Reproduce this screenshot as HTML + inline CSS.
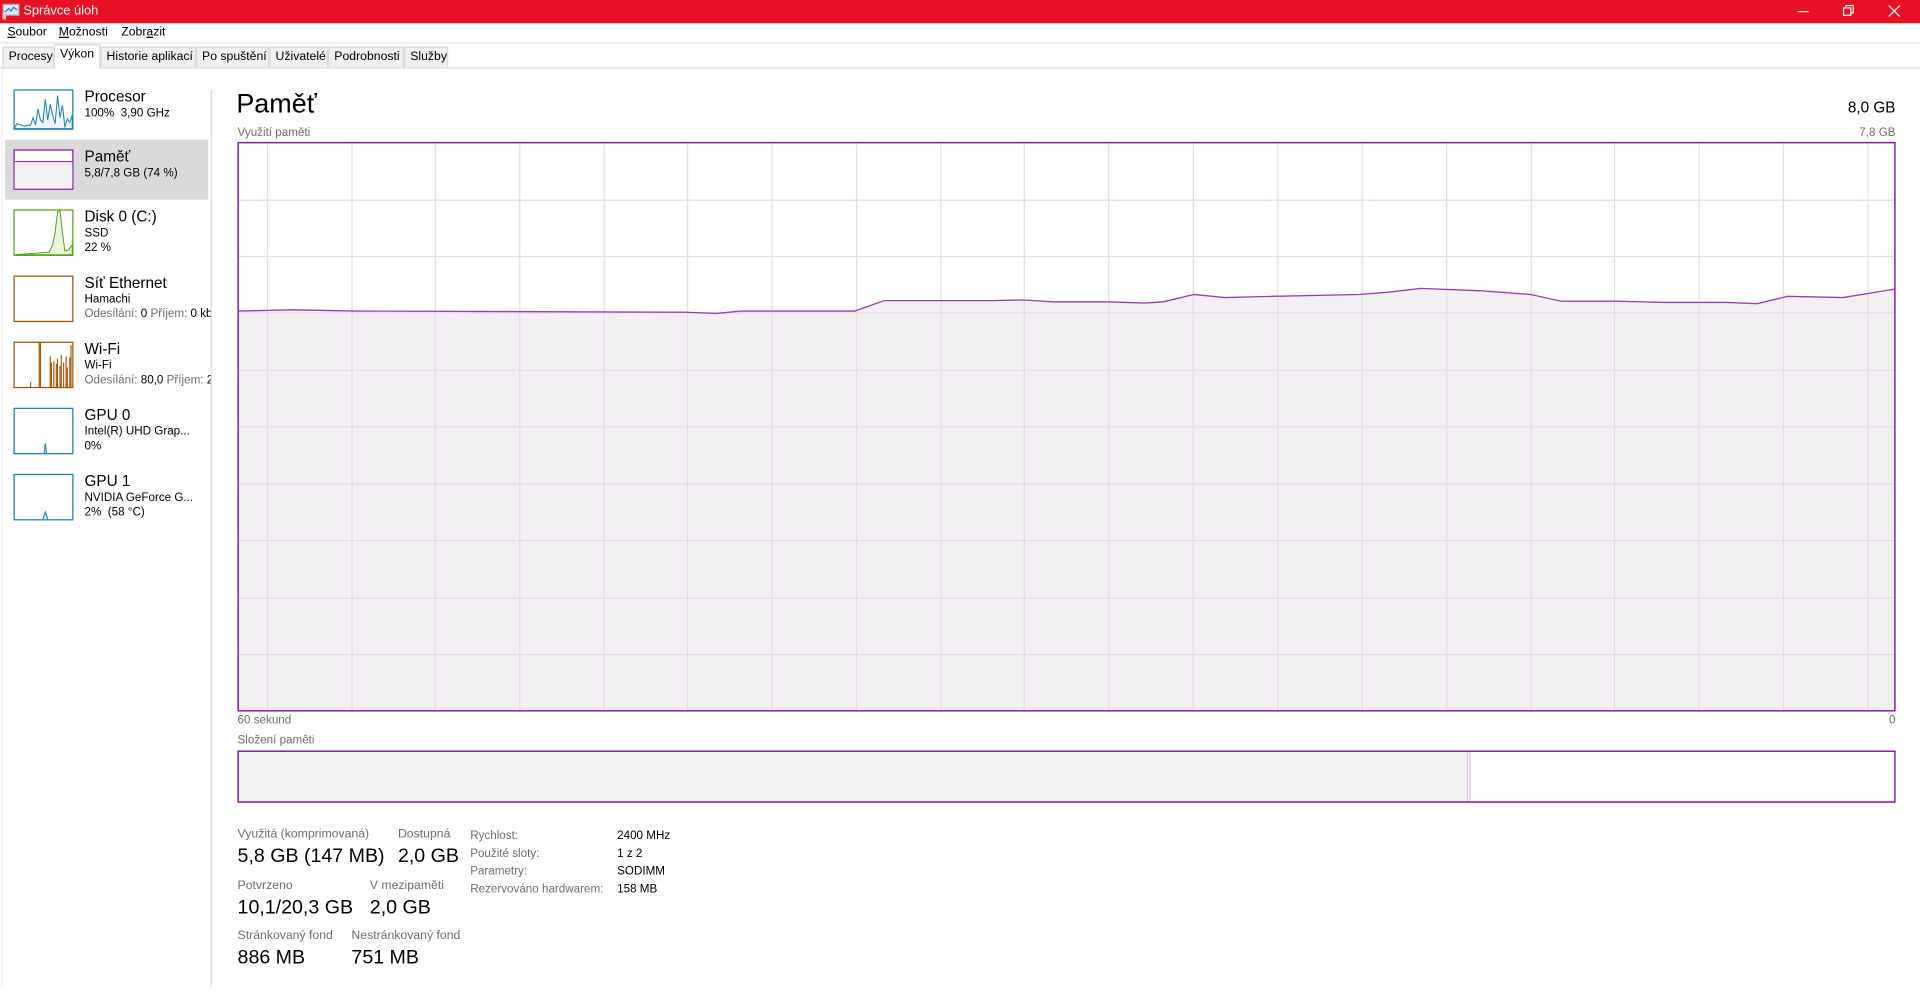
<!DOCTYPE html>
<html><head><meta charset="utf-8">
<style>
*{margin:0;padding:0;box-sizing:border-box}
html,body{width:1920px;height:997px;overflow:hidden;background:#fff}
#w{position:absolute;left:0;top:0;width:1568px;height:815px;transform:scale(1.22449);transform-origin:0 0;font-family:"Liberation Sans",sans-serif;color:#000}
.a{position:absolute;white-space:nowrap}
.tb{left:0;top:0;width:1568px;height:19px;background:#e81123;color:#fff}
.tab{position:absolute;top:38px;height:17px;border:1px solid #d9d9d9;border-bottom:none;background:#f0f0f0;font-size:10px;line-height:15px;padding-left:4px;color:#000}
.g{font-size:10px;color:#6d6d6d}
.v{font-size:16px;color:#000}
.it{font-size:12.5px}
.sub{font-size:9.5px;line-height:12px}
.gr{color:#6d6d6d}
</style></head><body><div id="w">
<div class="a tb">
  <svg class="a" style="left:2px;top:3px" width="14" height="13" viewBox="0 0 14 13"><rect x="0.5" y="0.5" width="13" height="9" fill="#dfe9f5" stroke="#9aa"/><polyline points="2,7 5,4 7,6 9,3 12,5" fill="none" stroke="#2b78c5" stroke-width="1"/><rect x="0" y="8" width="3" height="5" fill="#ccc"/></svg>
  <div class="a" style="left:19px;top:3px;font-size:10.5px">Správce úloh</div>
  <div class="a" style="left:1468px;top:9px;width:9px;height:1px;background:#fff"></div>
  <svg class="a" style="left:1505px;top:4px" width="10" height="10"><rect x="0.5" y="2.5" width="6" height="6" fill="none" stroke="#fff"/><polyline points="2.5,2.5 2.5,0.5 8.5,0.5 8.5,6.5 6.5,6.5" fill="none" stroke="#fff"/></svg>
  <svg class="a" style="left:1542px;top:4px" width="10" height="10"><path d="M0.5 0.5L9.5 9.5M9.5 0.5L0.5 9.5" stroke="#fff" stroke-width="1"/></svg>
</div>
<div class="a" style="top:21px;left:6px;font-size:10px"><u>S</u>oubor</div>
<div class="a" style="top:21px;left:48px;font-size:10px"><u>M</u>ožnosti</div>
<div class="a" style="top:21px;left:99px;font-size:10px">Zobr<u>a</u>zit</div>
<div class="a" style="top:34px;left:0;width:1568px;height:2px;background:#f0f0f0"></div>
<div class="a" style="top:55px;left:0;width:1568px;height:1px;background:#d9d9d9"></div>
<div class="tab" style="left:2px;width:42px">Procesy</div>
<div class="tab" style="left:44px;width:38px;top:36px;height:20px;background:#fff;z-index:2">Výkon</div>
<div class="tab" style="left:82px;width:78px">Historie aplikací</div>
<div class="tab" style="left:160px;width:60px">Po spuštění</div>
<div class="tab" style="left:220px;width:48px">Uživatelé</div>
<div class="tab" style="left:268px;width:62px">Podrobnosti</div>
<div class="tab" style="left:330px;width:36px">Služby</div>

<div class="a" style="left:1px;top:56px;width:1px;height:750px;background:#f0f0f0"></div>
<div class="a" style="left:172px;top:73px;width:1px;height:733px;background:#d9d9d9"></div>
<div class="a" style="left:4px;top:114px;width:166px;height:49px;background:#dadada"></div>
<svg class="a" style="left:0;top:60px" width="172" height="380" viewBox="0 60 172 380">
 <rect x="11.5" y="73.5" width="48" height="32" fill="#fff" stroke="#117dbb"/>
 <path d="M12 104 L14 101 L20 103 L25 102 L27 96 L29 102 L31 89 L33 98 L35 100 L37 81 L39 98 L41 85 L43 94 L45 101 L47 78 L49 96 L51 86 L53 104 L55 97 L57 100 L59 94 L59 105 L12 105Z" fill="#f1f6fa" stroke="#117dbb" stroke-width="0.8"/>
 <rect x="11.5" y="122.5" width="48" height="32" fill="#fff" stroke="#8b12ae"/>
 <rect x="12" y="132" width="47" height="22" fill="#f4f2f4"/>
 <line x1="12" y1="132" x2="59" y2="132" stroke="#8b12ae" stroke-width="0.8"/>
 <rect x="11.5" y="171.5" width="48" height="37" fill="#fff" stroke="#4da60c"/>
 <path d="M12 208 L40 206 L43 200 L45 190 L47 173 L49 172 L51 190 L53 205 L56 204 L59 200 L59 208Z" fill="#eaf3e2" stroke="#4da60c" stroke-width="0.8"/>
 <rect x="11.5" y="225.5" width="48" height="37" fill="#fff" stroke="#a74f01"/>
 <rect x="11.5" y="279.5" width="48" height="37" fill="#fff" stroke="#a74f01"/>
 <path d="M32 316V280M33 316V280M41 316V291M42 316V296M44 316V295M46 316V297M47 316V293M49 316V299M50 316V290M52 316V296M54 316V291M55 316V300M57 316V292M58 316V282M25 316V312" stroke="#a74f01" stroke-width="0.9"/>
 <rect x="11.5" y="333.5" width="48" height="37" fill="#fff" stroke="#117dbb"/>
 <path d="M36 370 L37 362 L38 370" fill="#cfe3f0" stroke="#117dbb" stroke-width="0.8"/>
 <rect x="11.5" y="387.5" width="48" height="37" fill="#fff" stroke="#117dbb"/>
 <path d="M35 424 L37 418 L39 424" fill="#cfe3f0" stroke="#117dbb" stroke-width="0.8"/>
</svg>
<div class="a it" style="left:69px;top:72px">Procesor</div>
<div class="a sub" style="left:69px;top:87px">100%&nbsp; 3,90 GHz</div>
<div class="a it" style="left:69px;top:121px">Paměť</div>
<div class="a sub" style="left:69px;top:136px">5,8/7,8 GB (74 %)</div>
<div class="a it" style="left:69px;top:170px">Disk 0 (C:)</div>
<div class="a sub" style="left:69px;top:185px">SSD<br>22 %</div>
<div class="a it" style="left:69px;top:224px">Síť Ethernet</div>
<div class="a sub" style="left:69px;top:239px;width:103px;overflow:hidden">Hamachi<br><span class="gr">Odesílání:</span> 0 <span class="gr">Příjem:</span> 0 kb</div>
<div class="a it" style="left:69px;top:278px">Wi-Fi</div>
<div class="a sub" style="left:69px;top:293px;width:103px;overflow:hidden">Wi-Fi<br><span class="gr">Odesílání:</span> 80,0 <span class="gr">Příjem:</span> 2</div>
<div class="a it" style="left:69px;top:332px">GPU 0</div>
<div class="a sub" style="left:69px;top:347px">Intel(R) UHD Grap...<br>0%</div>
<div class="a it" style="left:69px;top:386px">GPU 1</div>
<div class="a sub" style="left:69px;top:401px">NVIDIA GeForce G...<br>2%&nbsp; (58 °C)</div>

<div class="a" style="left:193px;top:72px;font-size:22px">Paměť</div>
<div class="a" style="right:20px;top:81px;font-size:12.5px">8,0 GB</div>
<div class="a g" style="left:194px;top:103px;font-size:9.5px">Využití paměti</div>
<div class="a g" style="right:20px;top:103px;font-size:9.5px">7,8 GB</div>
<svg class="a" style="left:0;top:0" width="1568" height="815">
 <path d="M195 254 L240 253 L290 254 L560 255 L585 256 L605 254 L698 254 L722 245.5 L765 245.5 L810 245.5 L835 245 L860 246.5 L905 246.5 L935 247.5 L950 246.5 L975 240.5 L1000 243 L1040 242 L1110 240.5 L1135 238.5 L1160 235.5 L1210 237.5 L1250 240.5 L1275 246 L1320 246 L1360 247 L1410 247 L1435 248 L1460 242 L1505 243 L1548 236 L1548 580 L195 580Z" fill="#f2f0f3" stroke="none"/>
 <g stroke="#e8d8ed" stroke-width="1">
  <path d="M195 163.5H1548M195 209.5H1548M195 255.5H1548M195 302.5H1548M195 348.5H1548M195 395.5H1548M195 441.5H1548M195 488.5H1548M195 534.5H1548"/>
  <path d="M218.5 117V580M287.5 117V580M355.5 117V580M424.5 117V580M493.5 117V580M561.5 117V580M630.5 117V580M699.5 117V580M768.5 117V580M836.5 117V580M905.5 117V580M974.5 117V580M1043.5 117V580M1112.5 117V580M1181.5 117V580M1250.5 117V580M1318.5 117V580M1387.5 117V580M1456.5 117V580M1525.5 117V580"/>
 </g>
 <polyline points="195,254 240,253 290,254 560,255 585,256 605,254 698,254 722,245.5 765,245.5 810,245.5 835,245 860,246.5 905,246.5 935,247.5 950,246.5 975,240.5 1000,243 1040,242 1110,240.5 1135,238.5 1160,235.5 1210,237.5 1250,240.5 1275,246 1320,246 1360,247 1410,247 1435,248 1460,242 1505,243 1548,236" fill="none" stroke="#9b3dbd" stroke-width="1.1"/>
 <rect x="194.5" y="116.5" width="1353" height="464" fill="none" stroke="#8b12ae" stroke-width="1.2"/>
 <rect x="195" y="614" width="1003" height="41" fill="#f4f2f4"/>
 <line x1="1198.5" y1="614" x2="1198.5" y2="655" stroke="#d9b9e3" stroke-width="1"/>
 <line x1="1200.5" y1="614" x2="1200.5" y2="655" stroke="#d9b9e3" stroke-width="1"/>
 <rect x="194.5" y="613.5" width="1353" height="41.5" fill="none" stroke="#8b12ae" stroke-width="1.2"/>
</svg>
<div class="a g" style="left:194px;top:583px;font-size:9.5px">60 sekund</div>
<div class="a g" style="right:20px;top:583px;font-size:9.5px">0</div>
<div class="a g" style="left:194px;top:599px;font-size:9.5px">Složení paměti</div>

<div class="a g" style="left:194px;top:676px">Využitá (komprimovaná)</div>
<div class="a v" style="left:194px;top:691px">5,8 GB (147 MB)</div>
<div class="a g" style="left:325px;top:676px">Dostupná</div>
<div class="a v" style="left:325px;top:691px">2,0 GB</div>
<div class="a g" style="left:194px;top:718px">Potvrzeno</div>
<div class="a v" style="left:194px;top:733px">10,1/20,3 GB</div>
<div class="a g" style="left:302px;top:718px">V mezipaměti</div>
<div class="a v" style="left:302px;top:733px">2,0 GB</div>
<div class="a g" style="left:194px;top:759px">Stránkovaný fond</div>
<div class="a v" style="left:194px;top:774px">886 MB</div>
<div class="a g" style="left:287px;top:759px">Nestránkovaný fond</div>
<div class="a v" style="left:287px;top:774px">751 MB</div>

<div class="a g" style="left:384px;top:676px;font-size:9.5px;line-height:14.7px">Rychlost:<br>Použité sloty:<br>Parametry:<br>Rezervováno hardwarem:</div>
<div class="a" style="left:504px;top:676px;font-size:9.5px;line-height:14.7px">2400 MHz<br>1 z 2<br>SODIMM<br>158 MB</div>
</div></body></html>
